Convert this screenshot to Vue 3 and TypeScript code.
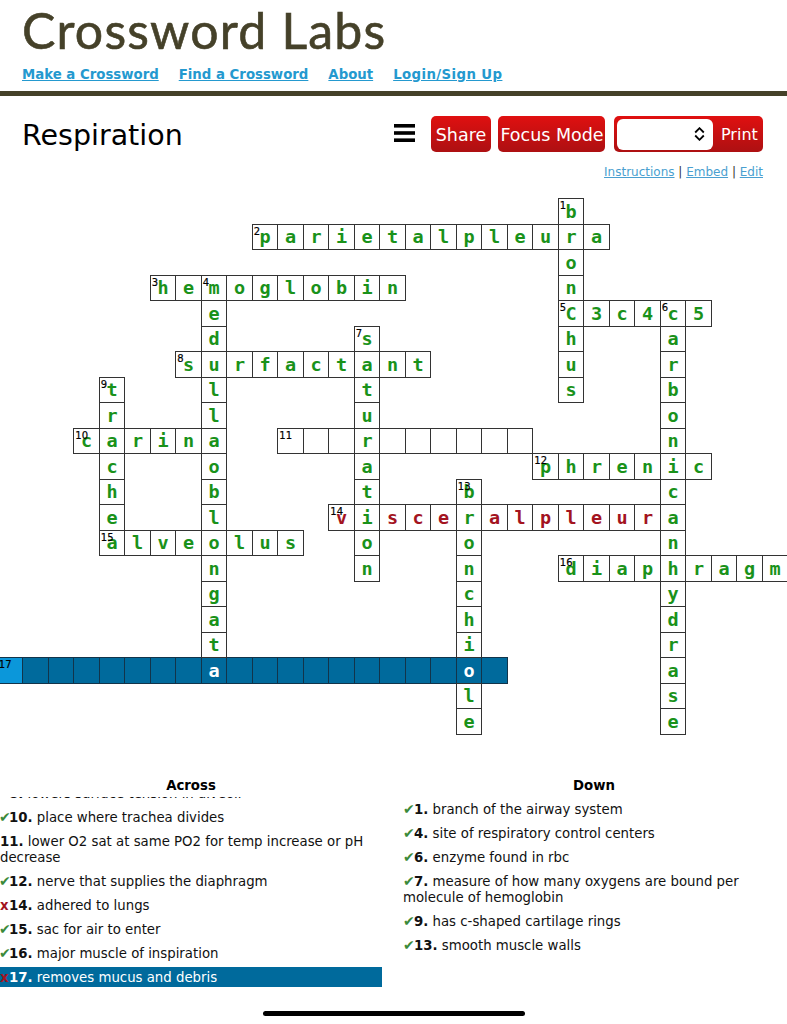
<template>
  <div class="page">
    <header class="site-head">
      <div class="logo">Crossword Labs</div>
      <nav class="site-nav">
        <a v-for="item in navItems" :key="item" href="#">{{ item }}</a>
      </nav>
    </header>

    <section class="title-row">
      <h1>Respiration</h1>
      <div class="tools">
        <svg class="burger" width="21" height="18" viewBox="0 0 21 18">
          <rect x="0" y="0" width="21" height="3.6" />
          <rect x="0" y="7.2" width="21" height="3.6" />
          <rect x="0" y="14.4" width="21" height="3.6" />
        </svg>
        <button class="red-btn share-btn">Share</button>
        <button class="red-btn focus-btn">Focus Mode</button>
        <div class="red-btn print-group">
          <div class="print-select">
            <svg width="11" height="14" viewBox="0 0 11 14">
              <path d="M1.200 5.500 5.500 1.200 9.800 5.500M1.200 8.500 5.500 12.800 9.800 8.500" fill="none" stroke="#000" stroke-width="1.800" />
            </svg>
          </div>
          <span class="print-label">Print</span>
        </div>
      </div>
    </section>

    <div class="sub-links">
      <a href="#">Instructions</a> | <a href="#">Embed</a> | <a href="#">Edit</a>
    </div>

    <!-- crossword grid -->
    <div class="grid">
      <div
        v-for="cell in cells"
        :key="cell.key"
        class="cell"
        :class="cell.state"
        :style="{ gridRow: cell.r + 1, gridColumn: cell.c + 1 }"
      >
        {{ cell.letter }}
        <span v-if="cell.num" class="num">{{ cell.num }}</span>
      </div>
    </div>

    <section class="clues">
      <div class="clue-col">
        <h3>Across</h3>
        <div class="clue-scroll">
          <ul class="across-list">
            <li v-for="clue in across" :key="clue.n" :class="{ active: clue.active }">
              <span v-if="clue.mark === 'ok'" class="mark-ok">✔</span>
              <span v-else-if="clue.mark === 'bad'" class="mark-bad">x</span>
              <b>{{ clue.n }}.</b> {{ clue.text }}
            </li>
          </ul>
        </div>
      </div>
      <div class="clue-col">
        <h3>Down</h3>
        <ul class="down-list">
          <li v-for="clue in down" :key="clue.n">
            <span class="mark-ok">✔</span>
            <b>{{ clue.n }}.</b> {{ clue.text }}
          </li>
        </ul>
      </div>
    </section>

    <div class="home-bar" />
  </div>
</template>

<script setup lang="ts">
import { computed } from 'vue'

interface Word {
  n: number
  r: number
  c: number
  dir: 'a' | 'd'
  text: string
  state: 'ok' | 'bad' | 'empty' | 'sel'
}

interface Cell {
  key: string
  r: number
  c: number
  letter: string
  num: number
  state: string
}

interface Clue {
  n: number
  text: string
  mark?: 'ok' | 'bad'
  active?: boolean
}

const navItems = ['Make a Crossword', 'Find a Crossword', 'About', 'Login/Sign Up']

const words: Word[] = [
  { n: 17, r: 18, c: 0, dir: 'a', text: '                    ', state: 'sel' },
  { n: 14, r: 12, c: 13, dir: 'a', text: 'visceralpleura', state: 'bad' },
  { n: 11, r: 9, c: 11, dir: 'a', text: '          ', state: 'empty' },
  { n: 1, r: 0, c: 22, dir: 'd', text: 'bronchus', state: 'ok' },
  { n: 2, r: 1, c: 10, dir: 'a', text: 'parietalpleura', state: 'ok' },
  { n: 3, r: 3, c: 6, dir: 'a', text: 'hemoglobin', state: 'ok' },
  { n: 4, r: 3, c: 8, dir: 'd', text: 'medullaoblongata', state: 'ok' },
  { n: 5, r: 4, c: 22, dir: 'a', text: 'C3c4c5', state: 'ok' },
  { n: 6, r: 4, c: 26, dir: 'd', text: 'carbonicanhydrase', state: 'ok' },
  { n: 7, r: 5, c: 14, dir: 'd', text: 'saturation', state: 'ok' },
  { n: 8, r: 6, c: 7, dir: 'a', text: 'surfactant', state: 'ok' },
  { n: 9, r: 7, c: 4, dir: 'd', text: 'trachea', state: 'ok' },
  { n: 10, r: 9, c: 3, dir: 'a', text: 'carina', state: 'ok' },
  { n: 12, r: 10, c: 21, dir: 'a', text: 'phrenic', state: 'ok' },
  { n: 13, r: 11, c: 18, dir: 'd', text: 'bronchiole', state: 'ok' },
  { n: 15, r: 13, c: 4, dir: 'a', text: 'alveolus', state: 'ok' },
  { n: 16, r: 14, c: 22, dir: 'a', text: 'diaphragm', state: 'ok' },
]

const cells = computed<Cell[]>(() => {
  const map = new Map<string, Cell>()
  for (const w of words) {
    ;[...w.text].forEach((ch, i) => {
      const r = w.dir === 'a' ? w.r : w.r + i
      const c = w.dir === 'a' ? w.c + i : w.c
      const key = `${r}-${c}`
      const old = map.get(key)
      const cell: Cell = old ?? { key, r, c, letter: '', num: 0, state: w.state }
      if (ch !== ' ') cell.letter = ch
      if (i === 0) cell.num = w.n
      // the selected row keeps its blue, other words overwrite in list order
      if (old && old.state !== 'sel') cell.state = w.state
      if (w.state === 'sel' && i === 0) cell.state = 'sel first'
      map.set(key, cell)
    })
  }
  return [...map.values()]
})

const across: Clue[] = [
  { n: 8, text: 'lowers surface tension in alveoli', mark: 'ok' },
  { n: 10, text: 'place where trachea divides', mark: 'ok' },
  { n: 11, text: 'lower O2 sat at same PO2 for temp increase or pH decrease' },
  { n: 12, text: 'nerve that supplies the diaphragm', mark: 'ok' },
  { n: 14, text: 'adhered to lungs', mark: 'bad' },
  { n: 15, text: 'sac for air to enter', mark: 'ok' },
  { n: 16, text: 'major muscle of inspiration', mark: 'ok' },
  { n: 17, text: 'removes mucus and debris', mark: 'bad', active: true },
]

const down: Clue[] = [
  { n: 1, text: 'branch of the airway system' },
  { n: 4, text: 'site of respiratory control centers' },
  { n: 6, text: 'enzyme found in rbc' },
  { n: 7, text: 'measure of how many oxygens are bound per molecule of hemoglobin' },
  { n: 9, text: 'has c-shaped cartilage rings' },
  { n: 13, text: 'smooth muscle walls' },
]
</script>

<style scoped>
.page {
  position: relative;
  width: 787px;
  height: 1024px;
  overflow: hidden;
  background: #fff;
  font-family: "DejaVu Sans", sans-serif;
  color: #111;
}

.site-head {
  height: 91px;
  border-bottom: 5px solid #454129;
  padding-left: 22px;
}

.logo {
  height: 60px;
  font-family: Lato, sans-serif;
  font-size: 50px;
  line-height: 60px;
  color: #454129;
  letter-spacing: 1.2px;
  -webkit-text-stroke: 0.6px #454129;
}

.site-nav {
  display: flex;
  gap: 20px;
  margin-top: 5px;
  font-size: 13.3px;
  line-height: 20px;
  font-weight: 700;
}

.site-nav a {
  color: #2499cf;
}

.site-nav a:last-child {
  letter-spacing: 0.4px;
}

.title-row {
  display: flex;
  justify-content: space-between;
  align-items: flex-start;
  padding: 20px 24px 0 22px;
}

.title-row h1 {
  margin: 0;
  font-size: 28.5px;
  font-weight: 400;
  line-height: 40px;
  color: #000;
}

.tools {
  display: flex;
  align-items: flex-start;
  gap: 9px;
}

.burger {
  margin: 8px 7px 0 0;
}

.red-btn {
  display: flex;
  align-items: center;
  justify-content: center;
  height: 36px;
  padding: 1px 0 0;
  border: none;
  border-radius: 5px;
  background: linear-gradient(#e01010, #ad1012);
  color: #fff;
  font-family: inherit;
  font-size: 17.5px;
}

.share-btn {
  width: 60px;
  margin-right: -2px;
}

.focus-btn {
  width: 107px;
  text-indent: 1px;
}

.print-group {
  width: 149px;
  gap: 8px;
  justify-content: flex-start;
  padding: 0 0 0 3px;
  box-sizing: border-box;
}

.print-label {
  font-size: 16px;
}

.print-select {
  display: flex;
  align-items: center;
  justify-content: flex-end;
  width: 96px;
  height: 31px;
  padding-right: 8px;
  box-sizing: border-box;
  background: #fff;
  border-radius: 6px;
}

.sub-links {
  margin-top: 8px;
  padding-right: 24px;
  text-align: right;
  font-size: 12px;
  line-height: 16px;
  color: #333;
}

.sub-links a {
  color: #4a9fd0;
}

.grid {
  display: grid;
  grid-template-columns: repeat(31, 25.5px);
  grid-template-rows: repeat(21, 25.5px);
  margin: 18px 0 0 -3.2px;
  width: 790.5px;
}

.cell {
  position: relative;
  display: flex;
  align-items: center;
  justify-content: center;
  margin: 0 -1px -1px 0;
  box-sizing: border-box;
  border: 1px solid #333;
  font-family: "DejaVu Sans Mono", monospace;
  font-size: 18.5px;
  font-weight: 700;
  background: #fff;
}

.cell.ok {
  color: #1a921a;
}

.cell.bad {
  color: #a3141f;
}

.cell.sel {
  background: #006a9c;
  color: #fff;
  border-color: #12344a;
}

.cell.first {
  background: #0b97da;
}

.num {
  position: absolute;
  top: 2px;
  left: 1px;
  font-family: "DejaVu Sans", sans-serif;
  font-size: 10px;
  font-weight: 400;
  line-height: 10px;
  color: #000;
  -webkit-text-stroke: 0.2px #000;
}

.clues {
  display: grid;
  grid-template-columns: 382px 382px;
  gap: 21px;
  margin-top: 44px;
  font-size: 13.3px;
  line-height: 16px;
}

.clue-col h3 {
  margin: 0;
  text-align: center;
  font-size: 13.3px;
  line-height: 16px;
  color: #000;
}

.clue-scroll {
  height: 191px;
  overflow: hidden;
  margin-top: 3px;
}

ul {
  list-style: none;
  margin: 0;
  padding: 0;
}

.down-list {
  margin-top: 8px;
}

.across-list {
  margin-top: -11px;
}

li {
  margin-bottom: 8px;
}

li.active {
  background: #006a9c;
  color: #fff;
  margin: -3px 0 0;
  padding: 3px 0 1px;
}

.mark-ok,
.mark-bad {
  display: inline-block;
  line-height: 1;
}

.mark-ok {
  width: 10px;
  color: #3a8a3a;
  font-size: 14px;
}

.mark-bad {
  width: 9px;
  color: #a3141f;
  font-weight: 700;
}

.across-list .mark-ok {
  margin-left: -1px;
}

.down-list .mark-ok {
  margin-right: 1px;
}

.home-bar {
  position: absolute;
  left: 263px;
  top: 1011px;
  width: 262px;
  height: 5px;
  border-radius: 3px;
  background: #000;
}
</style>
